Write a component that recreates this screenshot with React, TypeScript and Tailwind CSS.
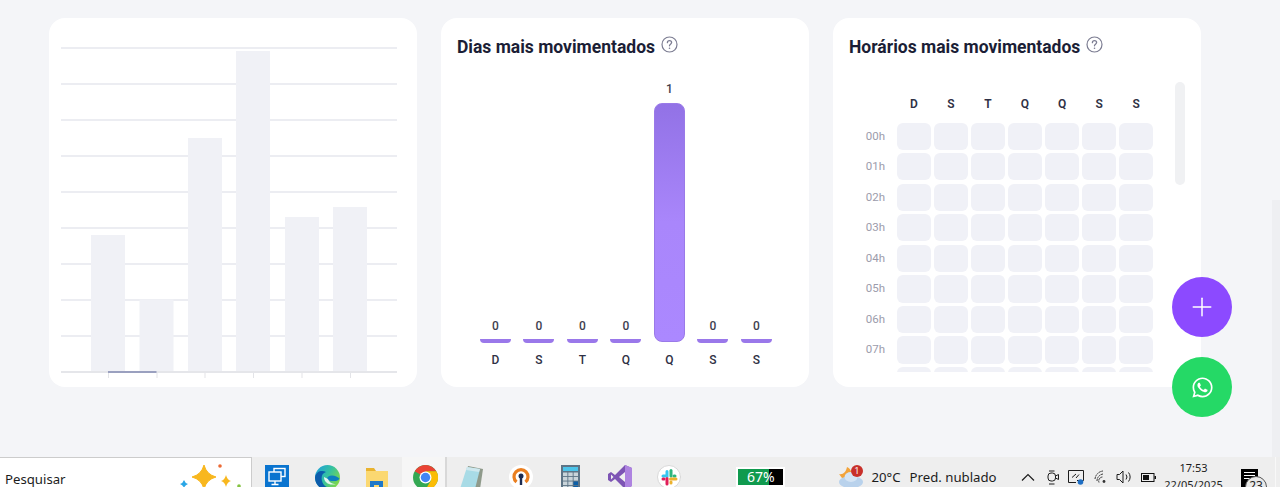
import { Plus } from "lucide-react";
import { FaWhatsapp } from "react-icons/fa";

const days = ["D", "S", "T", "Q", "Q", "S", "S"];
const dayValues = [0, 0, 0, 0, 1, 0, 0];
const hours = ["00h", "01h", "02h", "03h", "04h", "05h", "06h", "07h", ""];

const gridLines = [47, 83, 119, 155, 191, 227, 263, 299, 335];
const revenueBars = [
  { x: 91, top: 235 },
  { x: 139.5, top: 299.5 },
  { x: 188, top: 138 },
  { x: 236, top: 51 },
  { x: 285, top: 217 },
  { x: 333, top: 207 },
];
const ticks = [108, 156.5, 204.5, 253, 301.5, 350];

function HelpIcon() {
  return (
    <svg width="17" height="17" viewBox="0 0 17 17" className="mb-1.5 ml-1.5 shrink-0" fill="none">
      <circle cx="8.5" cy="8.5" r="7.5" stroke="#7c7d92" strokeWidth="1.2" />
      <path d="M6.4 6.7c0-1.2 1-2 2.1-2s2.1.8 2.1 1.900c0 1.600-2.100 1.700-2.100 3.200" stroke="#7c7d92" strokeWidth="1.3" strokeLinecap="round" />
      <circle cx="8.5" cy="12.2" r=".8" fill="#7c7d92" />
    </svg>
  );
}

function CardTitle({ children }: { children: string }) {
  return (
    <div className="flex h-[22px] items-center">
      <h2 className="text-[17.5px] leading-[22px] font-bold text-[#1b1e36]">{children}</h2>
      <HelpIcon />
    </div>
  );
}

function RevenueChart() {
  return (
    <section className="h-[369px] w-[368px] rounded-2xl bg-white">
      <svg width="368" height="369" viewBox="49 18 368 369">
        {gridLines.map((y) => (
          <rect key={y} x="61" y={y} width="336" height="2" fill="#ecedf2" />
        ))}
        {revenueBars.map((bar) => (
          <rect key={bar.x} x={bar.x} y={bar.top} width="34" height={371 - bar.top} fill="#f0f1f6" />
        ))}
        <rect x="61" y="371" width="336" height="2" fill="#e5e6ea" />
        <rect x="108" y="371" width="48.5" height="2" fill="#9aa0bf" />
        {ticks.map((x) => (
          <rect key={x} x={x} y="373" width="1" height="5" fill="#e3e4e8" />
        ))}
      </svg>
    </section>
  );
}

function BusiestDays() {
  return (
    <section className="flex h-[369px] w-[368px] flex-col rounded-2xl bg-white pt-[18px] pl-4">
      <CardTitle>Dias mais movimentados</CardTitle>
      <div className="mt-[22px] flex h-[263px] gap-[12.6px] pl-[23px]">
        {dayValues.map((value, i) => (
          <div key={i} className="flex w-[30.9px] flex-col items-center justify-end">
            {value > 0 ? (
              <>
                <span className="mb-[7px] text-xs leading-[14px] font-medium text-[#3f3f4f]">{value}</span>
                <div className="mb-px h-[239px] w-full rounded-lg border border-[#9a7ae8] bg-gradient-to-b from-[#9272e6] via-[#a986fb] via-50% to-[#ab88ff]" />
              </>
            ) : (
              <>
                <span className="mb-1.5 text-xs leading-[14px] font-medium text-[#3f3f4f]">{value}</span>
                <div className="h-1 w-full rounded-b-lg bg-[#9a78ea]" />
              </>
            )}
          </div>
        ))}
      </div>
      <div className="mt-[10px] flex gap-[12.6px] pl-[23px]">
        {days.map((day, i) => (
          <span key={i} className="w-[30.9px] text-center text-xs leading-[14px] font-medium text-[#2f3145]">
            {day}
          </span>
        ))}
      </div>
    </section>
  );
}

function BusiestHours() {
  return (
    <section className="relative flex h-[369px] w-[368px] flex-col rounded-2xl bg-white pt-[18px] pl-4">
      <CardTitle>Horários mais movimentados</CardTitle>
      <div className="mt-[25px] h-[289px] overflow-hidden">
        <div className="flex h-[39.5px] items-center pt-[2px] pl-[48px]">
          <div className="grid w-[256px] grid-cols-7 gap-x-[3.4px]">
            {days.map((day, i) => (
              <span key={i} className="text-center text-xs font-semibold text-[#2f3145]">
                {day}
              </span>
            ))}
          </div>
        </div>
        <div className="flex flex-col gap-[3.27px]">
          {hours.map((hour, row) => (
            <div key={row} className="flex items-center">
              <span className="w-[36px] text-right text-[11.5px] text-[#9c9cab]">{hour}</span>
              <div className="ml-3 grid w-[256px] grid-cols-7 gap-x-[3.4px]">
                {days.map((_, i) => (
                  <div key={i} className="h-[27.3px] rounded-md bg-[#f0f1f7]" />
                ))}
              </div>
            </div>
          ))}
        </div>
      </div>
      {/* scroll thumb of the heatmap */}
      <div className="absolute top-[64px] right-[16px] h-[103px] w-[10px] rounded-[5px] bg-[#f0f1f3]" />
    </section>
  );
}

function RemoteDesktopIcon() {
  return (
    <svg width="24" height="24" viewBox="0 0 24 24" fill="none">
      <rect width="24" height="24" fill="#0a74cf" />
      <rect x="9" y="3.5" width="11" height="8" fill="#0a74cf" stroke="#fff" strokeWidth="1.4" />
      <rect x="4" y="7" width="12" height="9" fill="#0a74cf" stroke="#fff" strokeWidth="1.4" />
      <path d="M10 16v3M6.5 19.5h7" stroke="#fff" strokeWidth="1.4" />
    </svg>
  );
}

function EdgeIcon() {
  return (
    <svg width="25" height="25" viewBox="0 0 25 25">
      <defs>
        <linearGradient id="edge-a" x1="0" y1="0" x2="1" y2="0.6">
          <stop offset="0" stopColor="#1b9de2" />
          <stop offset=".55" stopColor="#35c1a0" />
          <stop offset="1" stopColor="#7ed64b" />
        </linearGradient>
      </defs>
      <circle cx="12.5" cy="12.5" r="12.5" fill="url(#edge-a)" />
      <path d="M0 12.5C1 6 7 5 11 7c-4 1-5 5-4 9 1 5 7 9 14 6-2 2-5 3-8.500 3C5 25 0 19 0 12.500z" fill="#0c5cab" />
      <path d="M12 14c0-2 2-3.500 5-3.500 3 0 6 1.500 7.500 3-1 2-3 2.500-5.500 2.500-3 0-7-.5-7-2z" fill="#0d7ec0" />
      <path d="M9 12c0 6 6 9 12 7-4 0-7-2-8-5z" fill="#fff" opacity=".85" />
    </svg>
  );
}

function ExplorerIcon() {
  return (
    <svg width="22" height="21" viewBox="0 0 22 21" className="mt-[3px]">
      <path d="M0 0h8l2 3h12v18H0z" fill="#e9b32f" />
      <rect y="3" width="22" height="18" fill="#fbd871" />
      <path d="M4 21v-8h13v8h-4v-4H8v4z" fill="#1f78c8" />
    </svg>
  );
}

function ChromeIcon() {
  return (
    <svg width="25" height="25" viewBox="0 0 25 25">
      <circle cx="12.5" cy="12.5" r="12.5" fill="#34a853" />
      <path d="M12.500 12.500 1.700 6.200A12.500 12.500 0 0 1 23.300 6.200H12.500z" fill="#ea4335" />
      <path d="M12.500 6.200h10.800a12.500 12.500 0 0 1-11 18.800l5.600-9.400z" fill="#fbbc05" />
      <circle cx="12.5" cy="12.5" r="6" fill="#fff" />
      <circle cx="12.5" cy="12.5" r="4.700" fill="#4285f4" />
    </svg>
  );
}

function NotepadIcon() {
  return (
    <svg width="24" height="23" viewBox="0 0 24 23" className="mt-px">
      <path d="M8 0 23 3 20 23H2z" fill="#8f9a8b" />
      <path d="M7 1 20 3 15 23H0z" fill="#a8dbe6" />
      <path d="M7 1 20 3 19 6 6 4z" fill="#cfe8ee" />
    </svg>
  );
}

function VpnIcon() {
  return (
    <svg width="24" height="24" viewBox="0 0 24 24" fill="none">
      <circle cx="12" cy="12" r="12" fill="#fff" />
      <path d="M7.500 17a7 7 0 1 1 9 0" stroke="#ea7f20" strokeWidth="3.200" />
      <circle cx="12" cy="11" r="2.500" fill="#1c2c52" />
      <rect x="10.800" y="11" width="2.400" height="9" fill="#1c2c52" />
    </svg>
  );
}

function CalculatorIcon() {
  return (
    <svg width="19" height="24" viewBox="0 0 19 24">
      <rect width="19" height="24" fill="#5d7486" />
      <rect x="2" y="2" width="15" height="4" fill="#4cc4ea" />
      {[7.500, 12, 16.500, 21].map((y) =>
        [2, 7.300, 12.600].map((x) => (
          <rect key={`${x}-${y}`} x={x} y={y} width="4.400" height="3.600" fill={x > 12 && y > 12 ? "#0c5fa8" : "#c9d4da"} />
        )),
      )}
    </svg>
  );
}

function VisualStudioIcon() {
  return (
    <svg width="24" height="24" viewBox="0 0 24 24">
      <path d="M17 0 24 3v18l-7 3-10-10-4 3-3-2V9l3-2 4 3z" fill="#7d54b4" />
      <path d="M17 0 24 3v18l-7 3z" fill="#ae83e0" />
      <path d="M17 7v10l-6-5z" fill="#f0f0f0" />
      <path d="M3 9.500v5l2.500-2.500z" fill="#f0f0f0" />
    </svg>
  );
}

function SlackIcon() {
  return (
    <svg width="24" height="24" viewBox="0 0 24 24" fill="none" strokeWidth="3" strokeLinecap="round">
      <circle cx="12" cy="12" r="11.500" fill="#fff" stroke="#d8d8d8" strokeWidth="1" />
      <path d="M10 6.500v4.500H6" stroke="#36c5f0" />
      <path d="M14 5.500V11" stroke="#2eb67d" />
      <path d="M18 11h-1" stroke="#2eb67d" />
      <path d="M13.500 14H19" stroke="#ecb22e" />
      <path d="M14 18v-1" stroke="#ecb22e" />
      <path d="M10 13.500V19" stroke="#e01e5a" />
      <path d="M6 14h1" stroke="#e01e5a" />
    </svg>
  );
}

function SparkleIcon() {
  return (
    <svg width="72" height="29" viewBox="0 0 72 29">
      <path d="M25 7Q27.500 16.500 37 19Q27.500 21.500 25 31Q22.500 21.500 13 19Q22.500 16.500 25 7z" fill="#f8b71e" stroke="#f8b71e" strokeWidth="1" strokeLinejoin="round" />
      <path d="M47 17Q48.200 21.800 52 23Q48.200 24.200 47 29Q45.800 24.200 42 23Q45.800 21.800 47 17z" fill="#f8b71e" />
      <circle cx="41" cy="8" r="1.800" fill="#ec6a35" />
      <circle cx="60" cy="28" r="1.800" fill="#84c341" />
      <path d="M5 22Q6 25 9 26Q6 27 5 30Q4 27 1 26Q4 25 5 22z" fill="#2aa6e6" />
    </svg>
  );
}

function WeatherIcon() {
  return (
    <svg width="26" height="24" viewBox="0 0 26 24" className="shrink-0">
      <path d="M0 9c4 1 7-2 8-7 4 2 6 6 3 11H3z" fill="#f2a33a" />
      <ellipse cx="12" cy="17" rx="12" ry="6" fill="#b9d2ec" />
      <ellipse cx="12" cy="12" rx="6.500" ry="5" fill="#d5e4f4" />
      <circle cx="18" cy="6" r="6" fill="#c8302a" />
      <text x="18" y="9" textAnchor="middle" fontSize="8.500" fontFamily="Roboto, sans-serif" fill="#fff">
        1
      </text>
    </svg>
  );
}

function TrayIcons() {
  return (
    <div className="flex items-center text-[#1c1c1c]">
      <svg width="14" height="8" viewBox="0 0 14 8" fill="none" stroke="currentColor" strokeWidth="1.200" className="ml-6">
        <path d="M1 7.500 7 1.500 13 7.500" />
      </svg>
      <svg width="12" height="15" viewBox="0 0 12 15" fill="none" stroke="currentColor" strokeWidth="1" className="ml-3">
        <rect x="1" y="3" width="7.500" height="8" rx="3" />
        <path d="M8.500 6l3-1.500v5l-3-1.500M2 1h5.500M2 14h5.500" />
      </svg>
      <svg width="16" height="16" viewBox="0 0 16 16" fill="none" stroke="currentColor" strokeWidth="1" className="ml-[9px]">
        <path d="M.5 1.500h15v10H9M.5 1.500v12H8" />
        <path d="M4 8.500 8 5M8 9 11 5.500" />
        <circle cx="12.500" cy="13" r="2.800" fill="#1f6fc4" stroke="none" />
      </svg>
      <svg width="14" height="14" viewBox="0 0 14 14" fill="none" stroke="#333" strokeWidth="1" className="ml-[10px]">
        <path d="M1 9a9 9 0 0 1 8-8M3 11a7 7 0 0 1 6-7M5 12.500a4 4 0 0 1 4-5.500" strokeDasharray="2 .6" />
        <circle cx="10" cy="11.500" r="1.400" fill="#333" stroke="none" />
      </svg>
      <svg width="16" height="14" viewBox="0 0 16 14" fill="none" stroke="currentColor" strokeWidth="1" className="ml-2">
        <path d="M1 4.500h2.500L7 1v12L3.500 9.500H1zM10 4.500a4 4 0 0 1 0 5M12.500 2.500a7 7 0 0 1 0 9" />
      </svg>
      <svg width="15" height="9" viewBox="0 0 15 9" className="ml-[9px]">
        <rect x=".5" y=".5" width="12.500" height="8" fill="none" stroke="#111" />
        <rect x="2" y="2" width="6" height="5" fill="#111" />
        <rect x="13.500" y="3" width="1.500" height="3" fill="#111" />
      </svg>
    </div>
  );
}

function Taskbar() {
  const apps = [
    <RemoteDesktopIcon key="rdp" />,
    <EdgeIcon key="edge" />,
    <ExplorerIcon key="explorer" />,
    <ChromeIcon key="chrome" />,
    <NotepadIcon key="notepad" />,
    <VpnIcon key="vpn" />,
    <CalculatorIcon key="calc" />,
    <VisualStudioIcon key="vs" />,
    <SlackIcon key="slack" />,
  ];

  return (
    <footer className="flex h-[30px] shrink-0 overflow-hidden bg-[#eeeeee] font-['Noto_Sans',sans-serif] text-[13.2px] text-[#1c1c1c]">
      <div className="flex h-[30px] w-[252px] shrink-0 items-start justify-between border-t border-r border-[#cccccc] bg-white pl-[5px]">
        <span className="mt-[11px] leading-[20px]">Pesquisar</span>
        <SparkleIcon />
      </div>
      <div className="flex">
        {apps.map((icon, i) => {
          if (i === 3) {
            return (
              <div key={i} className="flex h-[30px] w-[45px] shrink-0 items-start justify-center border-r-2 border-[#d8d8d8] bg-[#f6f6f6] pt-2 pl-[3px]">
                {icon}
              </div>
            );
          }
          return (
            <div key={i} className={i < 3 ? "flex h-[30px] w-[50px] shrink-0 items-start justify-center pt-2" : "flex h-[30px] w-[49.3px] shrink-0 items-start justify-center pt-2"}>
              {icon}
            </div>
          );
        })}
      </div>
      <div className="mt-[10px] ml-[42.5px] flex h-[20px] w-[49px] shrink-0 border-2 border-white bg-black">
        <div className="relative h-full w-[31px] bg-[#109a4e]">
          <span className="absolute top-[-1px] left-[9px] text-[14px] leading-[18px] text-white">67%</span>
        </div>
      </div>
      <div className="ml-[54.5px] flex shrink-0 items-start pt-2">
        <WeatherIcon />
        <span className="ml-[6px] leading-[24px] whitespace-nowrap">20°C</span>
        <span className="ml-[9px] leading-[24px] whitespace-nowrap">Pred. nublado</span>
      </div>
      <div className="flex h-[26px] items-center pt-[14px]">
        <TrayIcons />
      </div>
      <div className="ml-2 flex w-[60px] shrink-0 flex-col items-center text-[11px] leading-[17px]">
        <span className="pt-[2px]">17:53</span>
        <span className="whitespace-nowrap">22/05/2025</span>
      </div>
    </footer>
  );
}

export default function App() {
  return (
    <div className="relative flex h-[487px] w-[1280px] flex-col overflow-hidden bg-[#f4f5f8] font-['Roboto',sans-serif]">
      <main className="flex-1 pt-[18px] pl-[49px]">
        <div className="flex gap-6">
          <RevenueChart />
          <BusiestDays />
          <BusiestHours />
        </div>
      </main>
      <Taskbar />

      {/* notification centre, sits over the taskbar's right end */}
      <div className="absolute top-[469px] left-[1241px] flex h-[18px] w-[17px] flex-col gap-[2px] bg-black px-[3px] pt-[3px]">
        <div className="h-px w-full bg-white" />
        <div className="h-px w-full bg-white" />
        <div className="h-px w-full bg-white" />
      </div>
      <div className="absolute top-[476px] left-[1245px] flex h-[22px] w-[22px] justify-center rounded-full border border-[#555] bg-[#e8e8e8] font-['Noto_Sans',sans-serif] text-[12px] leading-[18px] text-[#222]">
        23
      </div>
      <div className="absolute top-[457px] left-[1275px] h-[30px] w-px bg-[#f8f8f8]" />

      {/* page scrollbar */}
      <div className="absolute top-[200px] right-0 h-[257px] w-[8px] bg-[#eeeff2]" />

      <button type="button" className="absolute top-[277px] left-[1172px] flex h-[60px] w-[60px] items-center justify-center rounded-full bg-[#8c4aff] text-white">
        <Plus size={30} strokeWidth={1.2} />
      </button>
      <button type="button" className="absolute top-[357px] left-[1172px] flex h-[60px] w-[60px] items-center justify-center rounded-full bg-[#25d966] text-white">
        <FaWhatsapp size={23} />
      </button>
    </div>
  );
}
